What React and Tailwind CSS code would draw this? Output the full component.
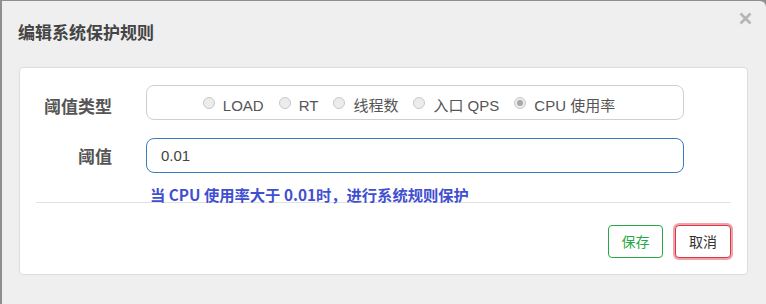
import React from 'react';

const RADIOS = [
  { id: 'load', text: 'LOAD' },
  { id: 'rt', text: 'RT' },
  { id: 'thread', text: '线程数' },
  { id: 'qps', text: '入口 QPS' },
  { id: 'cpu', text: 'CPU 使用率', checked: true },
];

const cjk = "font-['Noto_Sans_CJK_SC',sans-serif]";
const latin = "font-['Liberation_Sans','Noto_Sans_CJK_SC',sans-serif]";

const Radio = ({ text, checked }) => (
  <label className="flex items-start">
    <span className="mt-[1px] mr-[8px] flex h-[12px] w-[12px] items-center justify-center rounded-full border border-[#c8c8c8] bg-[#ececec]">
      {checked && <span className="h-[6px] w-[6px] rounded-full bg-[#a8a8a8]" />}
    </span>
    <span className={`${latin} text-[15px] leading-[20px] text-[#555]`}>{text}</span>
  </label>
);

const App = () => {
  return (
    <div className="h-[304px] w-[766px] overflow-hidden bg-[#8e8e8e] pl-[2px] pt-[1px]">
      <div className="relative h-[303px] rounded-tr-[6px] bg-[#efefef]">
        {/* Header */}
        <div className="h-[66px] pl-[16px] pt-[19px]">
          <h4 className={`${cjk} text-[17px] font-bold leading-[24px] text-[#444]`}>编辑系统保护规则</h4>
        </div>
        <button className="absolute right-[14px] top-[11px]" aria-label="close">
          <svg width="13" height="13" viewBox="0 0 13 13">
            <path d="M1.5 1.5 L11.5 11.5 M11.5 1.5 L1.5 11.5" stroke="#b5b5b5" strokeWidth="2.6" />
          </svg>
        </button>

        {/* Card */}
        <div className="ml-[17px] mr-[18px] rounded-[4px] border border-[#dcdcdc] bg-white px-[16px] pb-[16px] pt-[17px]">
          <div className="flex h-[35px] items-start">
            <div className={`${cjk} w-[76px] pt-[9px] text-right text-[17px] font-bold leading-[24px] text-[#555]`}>阈值类型</div>
            <div className="ml-[34px] flex h-[35px] w-[538px] items-start justify-center gap-[15px] rounded-[8px] border border-[#cfcfcf] pr-[12px] pt-[10px]">
              {RADIOS.map((r) => (
                <Radio key={r.id} text={r.text} checked={r.checked} />
              ))}
            </div>
          </div>

          <div className="mt-[18px] flex h-[35px] items-start">
            <div className={`${cjk} w-[76px] pt-[6px] text-right text-[17px] font-bold leading-[24px] text-[#555]`}>阈值</div>
            <div className="ml-[34px] flex h-[35px] w-[538px] items-center rounded-[8px] border border-[#3c7bbf] pl-[14px]">
              <span className={`${latin} text-[15px] leading-[20px] text-[#444]`}>0.01</span>
            </div>
          </div>

          <div className={`${cjk} mt-[11px] h-[18px] pl-[114px] text-[15.3px] font-bold leading-[20px] text-[#3f4fcf]`}>
            当 CPU 使用率大于 0.01时，进行系统规则保护
          </div>
          <div className="h-px bg-[#e2e2e2]" />

          <div className="flex justify-end gap-[12px] pt-[22px]">
            <button className={`${cjk} h-[33px] w-[55px] rounded-[4px] border border-[#28a745] bg-white text-[14px] text-[#28a745]`}>保存</button>
            <button className={`${cjk} h-[33px] w-[56px] rounded-[4px] border border-[#dc3545] bg-white text-[14px] text-[#333] shadow-[0_0_0_2px_rgba(220,53,69,0.45)]`}>取消</button>
          </div>
        </div>
      </div>
    </div>
  );
};

export default App;
